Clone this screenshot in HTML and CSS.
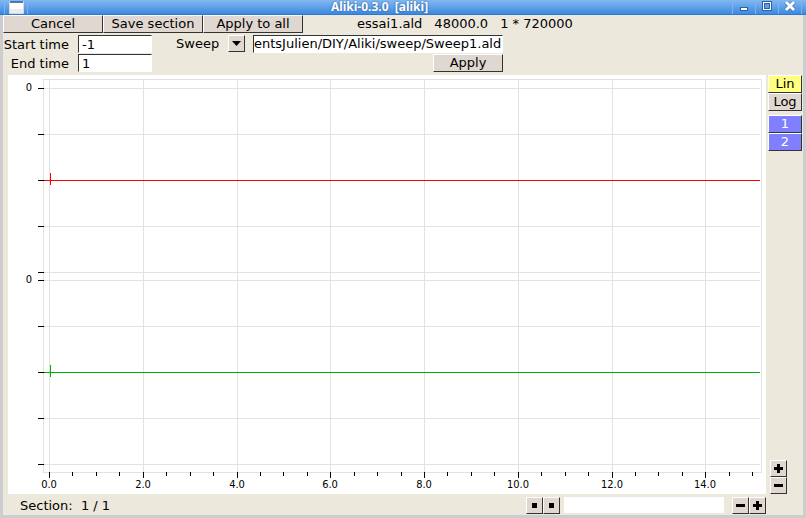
FILE: index.html
```
<!DOCTYPE html>
<html lang="en">
  <head>
    <meta charset="UTF-8" />
    <meta name="viewport" content="width=device-width, initial-scale=1.0" />
    <link rel="stylesheet" href="styles.css">
    <title>Aliki-0.3.0 [aliki]</title>
  </head>
  <body>
    <div class="window">
      <header class="titlebar">
        <div class="title-left">
          <button class="win-btn" aria-label="Window menu">
            <svg width="15" height="13" viewBox="0 0 15 13">
              <rect x="0" y="0" width="15" height="13" rx="1" fill="#d8dbe0" />
              <rect x="1" y="0" width="13" height="2" fill="#4d79b3" />
              <rect x="1" y="2" width="13" height="6" fill="#fff" />
              <rect x="1" y="8" width="13" height="4" fill="#ececec" />
            </svg>
          </button>
        </div>
        <h1 class="title">Aliki-0.3.0&nbsp; [aliki]</h1>
        <div class="title-right">
          <button class="win-btn" aria-label="Minimize">
            <svg width="12" height="12" viewBox="0 0 12 12">
              <path d="M2 6h8v4h-8z" fill="#2c62a5" />
              <path d="M3 7h6v2h-6z" fill="#fff" />
            </svg>
          </button>
          <button class="win-btn" aria-label="Maximize">
            <svg width="12" height="12" viewBox="0 0 12 12">
              <path d="M1 0h10v10h-10z" fill="#2c62a5" />
              <path d="M2 1h8v8h-8z" fill="#fff" />
              <path d="M3 2h6v6h-6z" fill="#2c62a5" />
              <path d="M4 3h4v4h-4z" fill="#5c9fe6" />
            </svg>
          </button>
          <button class="win-btn" aria-label="Close">
            <svg width="12" height="12" viewBox="0 0 12 12">
              <path d="M2 1l8 8M10 1l-8 8" stroke="#2c62a5" stroke-width="4" />
              <path d="M2 1l8 8M10 1l-8 8" stroke="#fff" stroke-width="3" />
            </svg>
          </button>
        </div>
      </header>

      <div class="toolbar">
        <button class="btn">Cancel</button>
        <button class="btn">Save section</button>
        <button class="btn">Apply to all</button>
        <div class="file-info">
          <span>essai1.ald</span>
          <span>48000.0</span>
          <span>1 * 720000</span>
        </div>
      </div>

      <div class="params">
        <div class="times">
          <label for="start">Start time</label>
          <input class="field" id="start" type="text" value="-1">
          <label for="end">End time</label>
          <input class="field" id="end" type="text" value="1">
        </div>
        <div class="sweep">
          <label for="sweep">Sweep</label>
          <button class="icon-btn" aria-label="Choose sweep">
            <svg width="9" height="5" viewBox="0 0 9 5"><path d="M0 0h9l-4.500 5z" /></svg>
          </button>
          <input class="field field-sweep" id="sweep" type="text" value="entsJulien/DIY/Aliki/sweep/Sweep1.ald">
          <button class="btn btn-apply">Apply</button>
        </div>
      </div>

      <main class="main">
        <div class="plot">
          <svg class="chart" viewBox="0 0 758 419" shape-rendering="crispEdges">
            <!-- grid -->
            <path class="grid" d="M35.500 4v393M41.500 4v393M135.500 4v393M229.500 4v393M322.500 4v393M416.500 4v393M510.500 4v393M604.500 4v393M697.500 4v393M753.500 4v394" />
            <path class="grid" d="M35 4.500h718M35 13.500h717M35 59.500h717M35 151.500h717M35 197.500h717M35 205.500h717M35 251.500h717M35 343.500h717M35 389.500h717M35 397.500h718" />
            <!-- axis ticks -->
            <path class="tick" d="M30 13.500h6M30 59.500h6M30 105.500h6M30 151.500h6M30 197.500h6M30 205.500h6M30 251.500h6M30 297.500h6M30 343.500h6M30 389.500h6" />
            <path class="tick" d="M41.500 397v6M135.500 397v6M229.500 397v6M322.500 397v6M416.500 397v6M510.500 397v6M604.500 397v6M697.500 397v6" />
            <path class="tick" d="M64.500 397v4M88.500 397v4M111.500 397v4M158.500 397v4M182.500 397v4M205.500 397v4M252.500 397v4M275.500 397v4M299.500 397v4M346.500 397v4M369.500 397v4M393.500 397v4M439.500 397v4M463.500 397v4M486.500 397v4M533.500 397v4M557.500 397v4M580.500 397v4M627.500 397v4M650.500 397v4M674.500 397v4M721.500 397v4M744.500 397v4" />
            <!-- channels -->
            <path class="ch1" d="M36 105.500h716M42.500 98v12" />
            <path class="ch2" d="M36 297.500h716M42.500 290v12" />
            <g class="labels">
              <text x="21" y="16">0</text>
              <text x="21" y="208">0</text>
              <text x="41" y="413">0.0</text>
              <text x="135" y="413">2.0</text>
              <text x="229" y="413">4.0</text>
              <text x="322" y="413">6.0</text>
              <text x="416" y="413">8.0</text>
              <text x="510" y="413">10.0</text>
              <text x="604" y="413">12.0</text>
              <text x="697" y="413">14.0</text>
            </g>
          </svg>
        </div>
        <aside class="side">
          <button class="btn side-btn lin">Lin</button>
          <button class="btn side-btn">Log</button>
          <div class="channels">
            <button class="btn side-btn channel">1</button>
            <button class="btn side-btn channel">2</button>
          </div>
          <div class="zoom-y">
            <button class="icon-btn" aria-label="Zoom in vertically">
              <svg width="9" height="9" viewBox="0 0 9 9"><path d="M3 0h3v3h3v3h-3v3h-3v-3h-3v-3h3z" /></svg>
            </button>
            <button class="icon-btn" aria-label="Zoom out vertically">
              <svg width="9" height="9" viewBox="0 0 9 9"><path d="M0 3h9v3h-9z" /></svg>
            </button>
          </div>
        </aside>
      </main>

      <footer class="footer">
        <div class="section">Section:&nbsp; 1 / 1</div>
        <div class="pair">
          <button class="icon-btn" aria-label="Previous">
            <svg width="5" height="5" viewBox="0 0 5 5"><path d="M0 0h5v5h-5z" /></svg>
          </button>
          <button class="icon-btn" aria-label="Next">
            <svg width="5" height="5" viewBox="0 0 5 5"><path d="M0 0h5v5h-5z" /></svg>
          </button>
        </div>
        <div class="scroll"></div>
        <div class="pair">
          <button class="icon-btn" aria-label="Zoom out">
            <svg width="9" height="9" viewBox="0 0 9 9"><path d="M0 3h9v3h-9z" /></svg>
          </button>
          <button class="icon-btn" aria-label="Zoom in">
            <svg width="9" height="9" viewBox="0 0 9 9"><path d="M3 0h3v3h3v3h-3v3h-3v-3h-3v-3h3z" /></svg>
          </button>
        </div>
      </footer>
    </div>
  </body>
</html>
```
FILE: styles.css
```
* {
  box-sizing: border-box;
}
body {
  margin: 0;
  background: #cdcdcf;
  font-family: "DejaVu Sans", sans-serif;
  font-size: 13px;
  color: #000;
}
button,
input {
  font: inherit;
  color: inherit;
  margin: 0;
}
svg {
  display: block;
}
.window {
  --bg: #ece8dc;
  --btn: #dfd7d0;
  border: 3px solid #cdcdcf;
  border-top: 0;
  background: var(--bg);
}

/* title bar */
.titlebar {
  display: flex;
  height: 15px;
  margin: 0 -3px;
  background: linear-gradient(#83b8f0, #3c89e0 14px, #2f78cc 14px);
}
.title-left,
.title-right {
  flex: 1;
  display: flex;
  padding: 0 4px;
}
.title-right {
  justify-content: flex-end;
}
.title {
  margin: 0;
  padding-right: 47px;
  font-family: "Noto Sans", sans-serif;
  font-size: 12px;
  line-height: 13px;
  color: #fff;
  text-shadow: 0 0 2px #1f4f8c;
}
.win-btn {
  width: 23px;
  height: 14px;
  padding: 0;
  border: 0;
  border-left: 1px solid #7fb2ee;
  background: none;
  display: flex;
  align-items: center;
  justify-content: center;
}
.win-btn:last-child {
  width: 24px;
  border-right: 1px solid #7fb2ee;
}

/* buttons and fields */
.btn,
.icon-btn {
  padding: 0;
  border: 1px solid;
  border-color: #fff #333 #333 #fff;
  background: var(--btn);
}
.btn {
  width: 100px;
  height: 18px;
  line-height: 16px;
}
.icon-btn {
  width: 17px;
  height: 17px;
  display: flex;
  align-items: center;
  justify-content: center;
}
.field {
  width: 100%;
  height: 18px;
  padding: 0 3px;
  border: 1px solid;
  border-color: #333 #fff #fff #333;
  background: #fff;
}

.toolbar {
  display: flex;
}
.file-info {
  display: flex;
  gap: 12px;
  margin-left: 54px;
  line-height: 17px;
}
.params {
  display: flex;
  gap: 24px;
  padding-top: 2px;
}
.times {
  display: grid;
  grid-template-columns: 66px 74px;
  gap: 1px 9px;
  line-height: 19px;
  text-align: right;
}
.times,
.sweep {
  grid-template-rows: 18px 18px;
}
.sweep {
  display: grid;
  grid-template-columns: 43px 17px 250px;
  gap: 1px 8px;
  line-height: 18px;
}
.sweep .icon-btn {
  margin-left: 1px;
}
.field-sweep {
  margin-left: 1px;
  padding: 0;
}
.btn-apply {
  grid-column: 3;
  justify-self: end;
  width: 70px;
  margin-right: -1px;
}

/* plot */
.main {
  display: flex;
  padding: 3px 1px 0 5px;
}
.plot {
  flex: 1;
  background: #fff;
}
.chart {
  width: 100%;
}
.grid,
.tick,
.ch1,
.ch2 {
  fill: none;
  stroke-width: 1;
}
.grid {
  stroke: #e2e2e2;
}
.tick {
  stroke: #000;
}
.ch1 {
  stroke: #f00;
}
.ch2 {
  stroke: #00b000;
}
.labels {
  font-family: "DejaVu Sans Condensed", "DejaVu Sans", sans-serif;
  font-size: 11px;
  text-anchor: middle;
}
.side {
  width: 36px;
  padding-left: 2px;
  display: flex;
  flex-direction: column;
}
.side-btn {
  width: 34px;
}
.lin {
  background: #ffff80;
}
.channels {
  display: flex;
  flex-direction: column;
  margin-top: 4px;
}
.channel {
  background: #8080ff;
  color: #fff;
}
.zoom-y {
  margin-top: auto;
  padding-left: 2px;
}

/* footer */
.footer {
  display: flex;
  padding: 3px 37px 1px 17px;
}
.section {
  flex: 1;
  line-height: 17px;
}
.pair {
  display: flex;
}
.scroll {
  width: 160px;
  height: 16px;
  margin: 0 8px 0 4px;
  background: #fff;
}
```
